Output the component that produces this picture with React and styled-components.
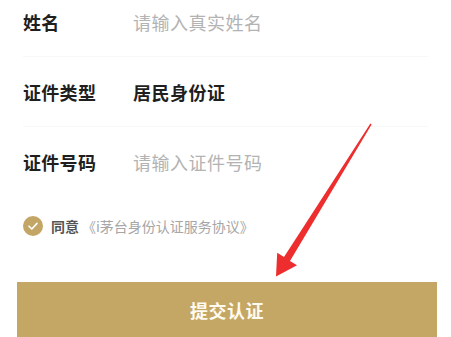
import React from 'react';
import styled, { createGlobalStyle } from 'styled-components';

const GlobalStyle = createGlobalStyle`
  html, body {
    margin: 0;
    padding: 0;
    background: #fff;
    font-family: "Noto Sans CJK SC", "Noto Sans", sans-serif;
  }
`;

const Page = styled.div`
  position: relative;
  width: 451px;
  height: 337px;
  overflow: hidden;
  background: #fff;
`;

const Form = styled.div`
  margin-top: -13px;
  padding: 0 23px;
`;

const Row = styled.div`
  display: flex;
  align-items: center;
  height: 70px;
  border-bottom: 1px solid ${props => (props.last ? 'transparent' : '#f8f8f8')};
  box-sizing: border-box;
`;

const Label = styled.div`
  width: 110px;
  font-size: 18px;
  font-weight: 700;
  letter-spacing: 0.3px;
  color: #1f1f1f;
`;

const Value = styled.div`
  font-size: 18px;
  letter-spacing: 0.5px;
  font-weight: ${props => (props.placeholder ? 400 : 700)};
  color: ${props => (props.placeholder ? '#b3b3b3' : '#1f1f1f')};
`;

const Agree = styled.div`
  display: flex;
  align-items: center;
  gap: 8px;
  margin: 19px 23px 0;
  height: 20px;
  font-size: 14px;
`;

const Check = styled.span`
  display: flex;
  align-items: center;
  justify-content: center;
  width: 20px;
  height: 20px;
  border-radius: 50%;
  background: #c3a665;
`;

const AgreeText = styled.span`
  color: #555;
  font-weight: 700;
  margin-right: 3px;
`;

const Terms = styled.span`
  color: #a6a6a6;
`;

const Submit = styled.button`
  display: flex;
  align-items: center;
  justify-content: center;
  margin: 46px 14px 0 17px;
  width: 420px;
  height: 56px;
  border: none;
  background: #c4a765;
  color: #fffaf0;
  font-family: inherit;
  font-size: 18px;
  font-weight: 700;
  letter-spacing: 0.5px;
`;

const Arrow = styled.svg`
  position: absolute;
  left: 0;
  top: 0;
  pointer-events: none;
`;

export default function App() {
  return (
    <Page>
      <GlobalStyle />
      <Form>
        <Row>
          <Label>姓名</Label>
          <Value placeholder="1">请输入真实姓名</Value>
        </Row>
        <Row>
          <Label>证件类型</Label>
          <Value>居民身份证</Value>
        </Row>
        <Row last>
          <Label>证件号码</Label>
          <Value placeholder="1">请输入证件号码</Value>
        </Row>
      </Form>
      <Agree>
        <Check>
          <svg width="12" height="12" viewBox="0 0 12 12" fill="none">
            <path d="M2 6.2L4.8 9L10 3.4" stroke="#fff" strokeWidth="1.6" strokeLinecap="round" strokeLinejoin="round" />
          </svg>
        </Check>
        <span>
          <AgreeText>同意</AgreeText>
          <Terms>《i茅台身份认证服务协议》</Terms>
        </span>
      </Agree>
      <Submit>提交认证</Submit>
      <Arrow width="451" height="337" viewBox="0 0 451 337">
        <polygon
          points="371.6,124.4 290,261 297,265.2 276,276.5 277.2,252.8 284,257.1 370.4,123.6"
          fill="#ee2e2e"
        />
      </Arrow>
    </Page>
  );
}
